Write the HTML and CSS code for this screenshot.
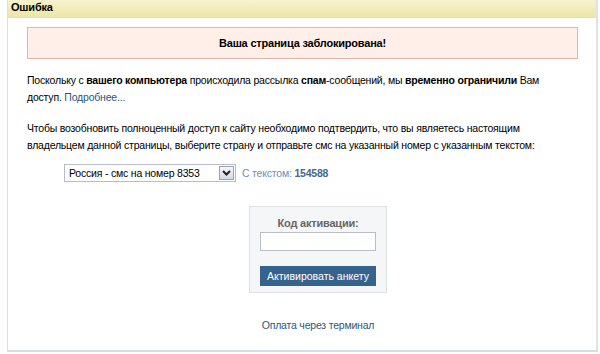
FILE: index.html
```html
<!DOCTYPE html>
<html lang="ru">
<head>
  <meta charset="UTF-8">
  <title>Ошибка</title>
  <link rel="stylesheet" href="styles.css">
</head>
<body>
  <div class="box">
    <div class="box-head">Ошибка</div>
    <div class="box-body">
      <div class="alert">Ваша страница заблокирована!</div>

      <p>Поскольку с <b>вашего компьютера</b> происходила рассылка <b>спам</b>-сообщений, мы <b>временно ограничили</b> Вам доступ. <a href="#">Подробнее...</a></p>

      <p>Чтобы возобновить полноценный доступ к сайту необходимо подтвердить, что вы являетесь настоящим владельцем данной страницы, выберите страну и отправьте смс на указанный номер с указанным текстом:</p>

      <div class="sms-row">
        <div class="select">
          <span>Россия - смс на номер 8353</span>
          <span class="select-btn">
            <svg width="9" height="6" viewBox="0 0 9 6"><path d="M1 1 L4.5 4.5 L8 1" fill="none" stroke="#222" stroke-width="2"/></svg>
          </span>
        </div>
        <span class="sms-text">С текстом: <b>154588</b></span>
      </div>

      <div class="form">
        <div class="activate">
          <div class="activate-label">Код активации:</div>
          <div class="activate-input"></div>
          <button class="activate-btn">Активировать анкету</button>
        </div>
        <div class="terminal"><a href="#">Оплата через терминал</a></div>
      </div>
    </div>
  </div>
</body>
</html>
```
FILE: styles.css
```css
body { margin: 0; font-family: "Liberation Sans", Arial, sans-serif; font-size: 10.5px; letter-spacing: -0.2px; color: #000; background: #fff; }
a { color: #2b587a; text-decoration: none; }
.box { margin-left: 7px; width: 588px; height: 350px; border-left: 1px solid #d8dde4; border-right: 2px solid #dfe3e8; border-bottom: 2px solid #d8dde4; }
.box-head { height: 17px; line-height: 15px; padding-left: 3px; font-size: 11px; font-weight: bold; background: linear-gradient(#f8f3cf, #ede5a6); border-bottom: 1px solid #e8e0a8; }
.box-body { padding: 9px 18px 0 19px; }
.alert { height: 30px; line-height: 30px; text-align: center; font-size: 11px; font-weight: bold; background: #ffefe8; border: 1px solid #e4b4a6; }
p { max-width: 530px; margin: 13px 0 0; line-height: 17px; }
p + p { margin-top: 14px; }
.sms-row { display: flex; align-items: center; gap: 6px; margin: 10px 0 0 37px; }
.select { display: flex; align-items: center; justify-content: space-between; width: 165px; height: 16px; padding: 0 1px 0 4px; border: 1px solid #b8bcc4; }
.select-btn { display: flex; align-items: center; justify-content: center; width: 13px; height: 12px; border: 1px solid #98a2b2; background: linear-gradient(#f4f6fa, #d4dae4); }
.sms-text { color: #6d8fb3; }
.sms-text b { color: #45688e; }
.form { padding-left: 31px; }
.activate { width: 136px; margin: 24px auto 0; padding: 9px 0 6px; background: #f5f6f8; border: 1px solid #dde0e5; text-align: center; }
.activate-label { font-size: 11px; font-weight: bold; color: #666; line-height: 14px; margin-bottom: 2px; }
.activate-input { width: 114px; height: 17px; margin: 0 auto; background: #fff; border: 1px solid #b9bec6; }
.activate-btn { display: block; width: 116px; height: 20px; margin: 15px auto 0; padding: 0; border: none; background: #36638e; color: #fff; font: inherit; }
.terminal { text-align: center; margin-top: 26px; }
```
